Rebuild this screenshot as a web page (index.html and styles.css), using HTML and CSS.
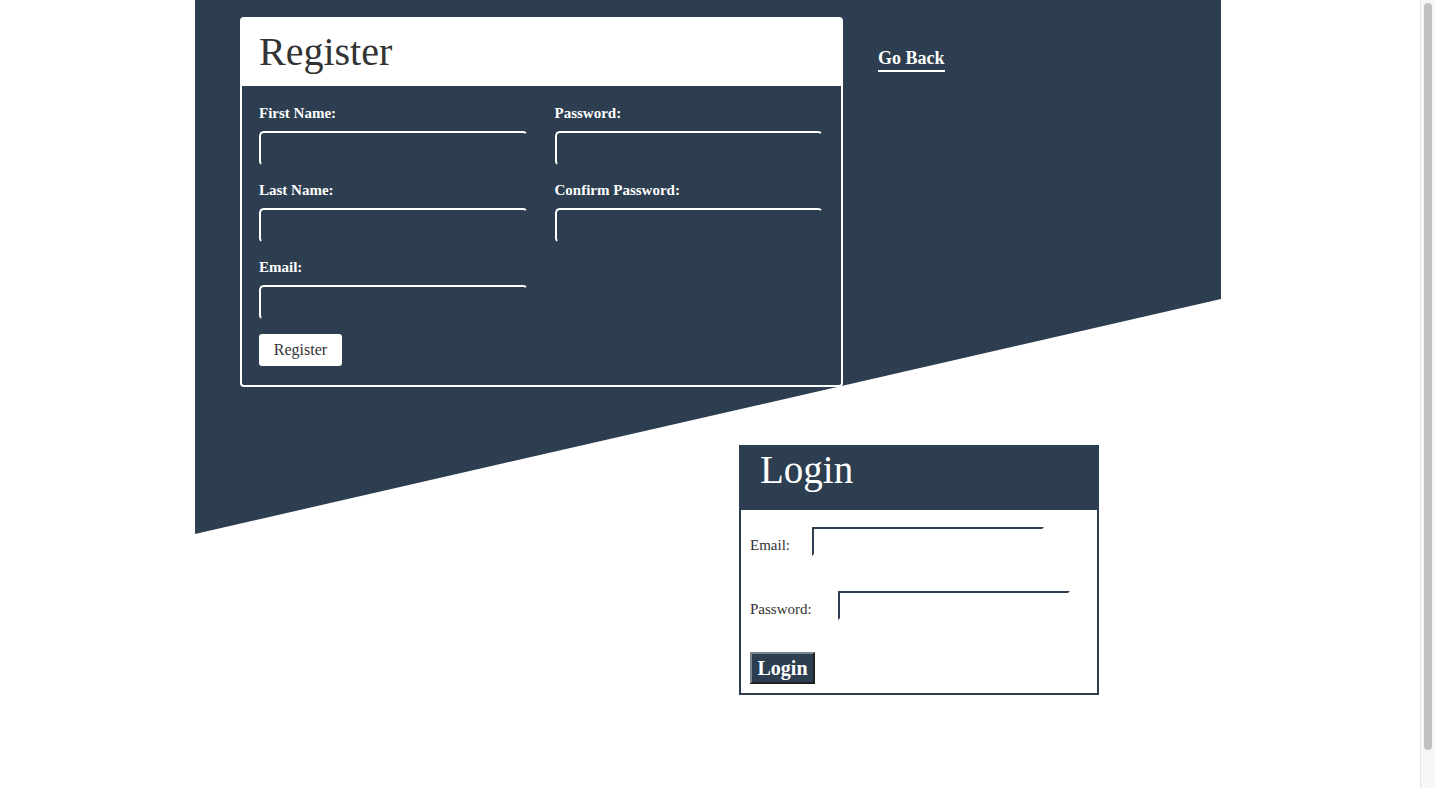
FILE: index.html
```html
<!DOCTYPE html>
<html lang="en">
<head>
<meta charset="utf-8">
<title>Register / Login</title>
<link rel="stylesheet" href="styles.css">
</head>
<body>
<div class="page">
  <div class="top">
    <section class="reg-card">
      <header class="reg-head"><h1 class="reg-title">Register</h1></header>
      <form class="reg-body">
        <div class="reg-grid">
          <div class="field">
            <label class="reg-label">First Name:</label>
            <input class="reg-input" type="text">
          </div>
          <div class="field">
            <label class="reg-label">Password:</label>
            <input class="reg-input" type="password">
          </div>
          <div class="field">
            <label class="reg-label">Last Name:</label>
            <input class="reg-input" type="text">
          </div>
          <div class="field">
            <label class="reg-label">Confirm Password:</label>
            <input class="reg-input" type="password">
          </div>
          <div class="field">
            <label class="reg-label">Email:</label>
            <input class="reg-input" type="email">
          </div>
        </div>
        <button class="reg-btn" type="button">Register</button>
      </form>
    </section>
    <a class="back" href="#">Go Back</a>
  </div>

  <section class="login-card">
    <header class="login-head"><h1 class="login-title">Login</h1></header>
    <form class="login-body">
      <div class="login-row">
        <label class="login-label login-label-email">Email:</label>
        <input class="login-input" type="email">
      </div>
      <div class="login-row">
        <label class="login-label login-label-pass">Password:</label>
        <input class="login-input" type="password">
      </div>
      <button class="login-btn" type="button">Login</button>
    </form>
  </section>
</div>
<div class="scrollbar"><div class="scroll-thumb"></div></div>
</body>
</html>
```

FILE: styles.css
```css
* { box-sizing: border-box; }

html, body {
  margin: 0;
  padding: 0;
  background: #ffffff;
  font-family: "Liberation Serif", "Times New Roman", serif;
  overflow: hidden;
}

.page {
  position: relative;
  width: 1026px;
  height: 788px;
  margin-left: calc(50% - 522.5px);
  padding-top: 17px;
}

.page::before {
  content: "";
  position: absolute;
  left: 0;
  top: 0;
  width: 100%;
  height: 535px;
  background: #2c3e50;
  clip-path: polygon(0 0, 100% 0, 100% 299px, 0 534px);
  z-index: 0;
}

.top {
  position: relative;
  z-index: 1;
  display: flex;
  align-items: flex-start;
  padding-left: 45px;
  gap: 35px;
}

/* Register card */
.reg-card {
  width: 603px;
  border: 2px solid #ffffff;
  border-radius: 4px;
  background: #2c3e50;
}

.reg-head {
  background: #ffffff;
  height: 67px;
  padding-left: 17px;
  display: flex;
  align-items: center;
}

.reg-title {
  margin: 0;
  font-size: 40px;
  font-weight: normal;
  color: #333333;
  line-height: 1;
  padding-bottom: 2px;
}

.reg-body {
  padding: 19px 18px 19px 17px;
}

.reg-grid {
  display: grid;
  grid-template-columns: 1fr 1fr;
  column-gap: 27px;
  row-gap: 16px;
}

.field {
  display: flex;
  flex-direction: column;
}

.reg-label {
  color: #ffffff;
  font-weight: bold;
  font-size: 15px;
  line-height: 17px;
  margin-bottom: 9px;
}

.reg-input {
  height: 35px;
  width: 100%;
  margin: 0;
  background: transparent;
  border: 2px solid transparent;
  border-top-color: #ffffff;
  border-left-color: #ffffff;
  border-radius: 5px;
  outline: none;
  color: #ffffff;
}

.reg-btn {
  margin-top: 14px;
  width: 83px;
  height: 32px;
  border: none;
  border-radius: 3px;
  background: #ffffff;
  color: #333333;
  font-family: "Liberation Serif", "Times New Roman", serif;
  font-size: 16px;
  padding: 0;
}

.back {
  margin-top: 31px;
  color: #ffffff;
  font-size: 18px;
  font-weight: bold;
  text-decoration: none;
  line-height: 21px;
  padding-bottom: 1px;
  border-bottom: 2px solid #ffffff;
}

/* Login card */
.login-card {
  position: relative;
  z-index: 1;
  width: 360px;
  margin-left: 544px;
  margin-top: 58px;
  border: 2px solid #2c3e50;
  background: #ffffff;
}

.login-head {
  background: #2c3e50;
  height: 63px;
  padding-left: 19px;
  display: flex;
  align-items: center;
}

.login-title {
  margin: 0;
  font-size: 39px;
  font-weight: normal;
  color: #ffffff;
  line-height: 1;
  padding-bottom: 18px;
}

.login-body {
  padding: 17px 9px 9px 9px;
  display: flex;
  flex-direction: column;
  align-items: flex-start;
}

.login-row {
  display: flex;
  align-items: flex-end;
  margin-bottom: 35px;
}

.login-row + .login-row {
  margin-bottom: 32px;
}

.login-label {
  color: #333333;
  font-size: 15px;
  line-height: 17px;
  padding-bottom: 2px;
}

.login-label-email {
  margin-right: 22px;
}

.login-label-pass {
  margin-right: 26px;
}

.login-input {
  width: 232px;
  height: 29px;
  margin: 0;
  background: transparent;
  border: 2px solid transparent;
  border-top-color: #2c3e50;
  border-left-color: #2c3e50;
  border-radius: 0;
  outline: none;
}

.login-btn {
  width: 65px;
  height: 32px;
  padding: 0;
  background: #2c3e50;
  color: #ffffff;
  font-family: "Liberation Serif", "Times New Roman", serif;
  font-size: 20px;
  font-weight: bold;
  border: 2px solid;
  border-color: #7b838c #1f1f1f #1f1f1f #7b838c;
}

/* Fake window scrollbar drawn over the right edge */
.scrollbar {
  position: fixed;
  top: 0;
  right: 0;
  width: 15px;
  height: 100vh;
  background: #f7f7f7;
  border-left: 1px solid #e6e6e6;
  z-index: 5;
}

.scroll-thumb {
  margin: 3px 0 0 3px;
  width: 8px;
  height: 747px;
  border-radius: 4px;
  background: #c1c1c1;
}
```
